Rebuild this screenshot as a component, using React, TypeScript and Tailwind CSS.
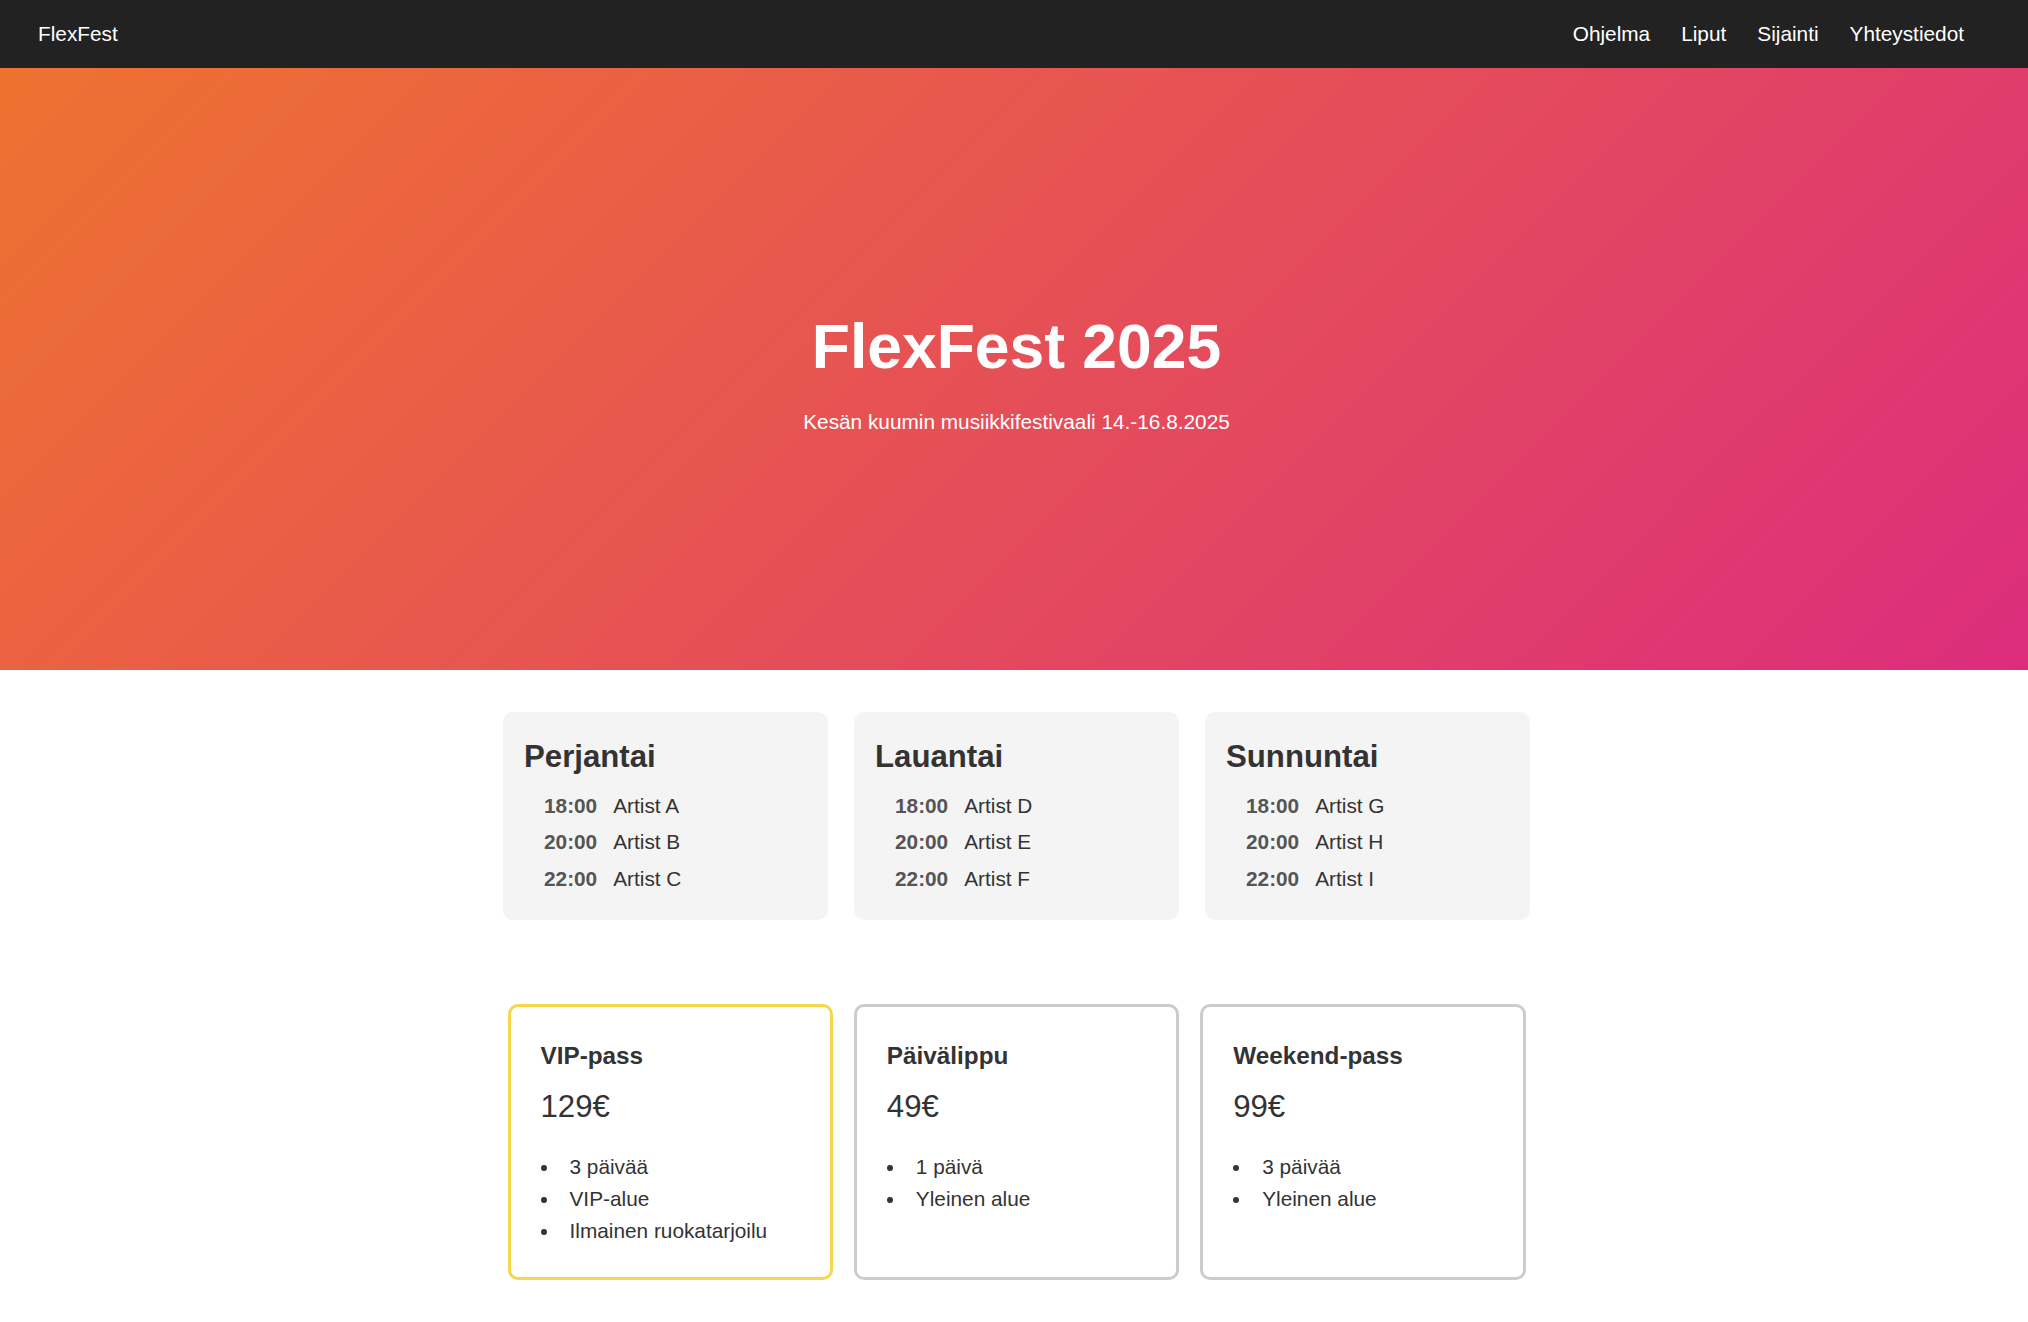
import React from "react";

const days = [
  { name: "Perjantai", rows: [["18:00", "Artist A"], ["20:00", "Artist B"], ["22:00", "Artist C"]] },
  { name: "Lauantai", rows: [["18:00", "Artist D"], ["20:00", "Artist E"], ["22:00", "Artist F"]] },
  { name: "Sunnuntai", rows: [["18:00", "Artist G"], ["20:00", "Artist H"], ["22:00", "Artist I"]] },
];

const tickets = [
  { name: "VIP-pass", price: "129€", items: ["3 päivää", "VIP-alue", "Ilmainen ruokatarjoilu"], vip: true },
  { name: "Päivälippu", price: "49€", items: ["1 päivä", "Yleinen alue"], vip: false },
  { name: "Weekend-pass", price: "99€", items: ["3 päivää", "Yleinen alue"], vip: false },
];

export default function App() {
  return (
    <div className="min-h-[1322px] bg-white font-['Liberation_Sans',Arial,sans-serif] text-[#333]">
      <nav className="flex h-[68px] items-center justify-between bg-[#222] pl-[38px] pr-[64px] text-[20.8px] text-white">
        <div>FlexFest</div>
        <ul className="flex gap-[31px]">
          <li>Ohjelma</li>
          <li>Liput</li>
          <li>Sijainti</li>
          <li>Yhteystiedot</li>
        </ul>
      </nav>

      <header className="flex h-[602px] flex-col items-center justify-center bg-[linear-gradient(135deg,#ef7230,#dc2d7d)] pl-[5px] pt-[6px] text-white">
        <h1 className="text-[62.4px] font-bold leading-[72px]">FlexFest 2025</h1>
        <p className="mt-[27px] text-[20.8px] leading-[24px]">Kesän kuumin musiikkifestivaali 14.-16.8.2025</p>
      </header>

      <div className="pl-[5px]">
        <section className="mx-auto mt-[42px] grid w-[1027px] grid-cols-3 gap-[26px]">
          {days.map((d) => (
            <div key={d.name} className="rounded-[10px] bg-[#f4f4f4] px-[21px] pb-[23px] pt-[27px]">
              <h2 className="text-[31.2px] font-bold leading-[35px]">{d.name}</h2>
              <ul className="mt-[13px]">
                {d.rows.map(([t, a]) => (
                  <li key={t} className="flex h-[36.5px] items-center pl-[20px] text-[20.8px]">
                    <span className="mr-[16px] font-bold text-[#555]">{t}</span>
                    <span>{a}</span>
                  </li>
                ))}
              </ul>
            </div>
          ))}
        </section>

        <section className="mx-auto mt-[84px] grid w-[1018px] grid-cols-3 gap-[21px]">
          {tickets.map((t) => (
            <div
              key={t.name}
              className={
                t.vip
                  ? "rounded-[10px] border-[3px] border-[#f6d64c] px-[30px] pb-[30px] pt-[35px]"
                  : "rounded-[10px] border-[3px] border-[#cccccc] px-[30px] pb-[30px] pt-[35px]"
              }
            >
              <h3 className="text-[24.3px] font-bold leading-[27px]">{t.name}</h3>
              <div className="mt-[20px] text-[31.2px] leading-[36px]">{t.price}</div>
              <ul className="mt-[26px]">
                {t.items.map((i) => (
                  <li key={i} className="flex h-[32px] items-center text-[20.8px]">
                    <span className="mt-[3px] h-[6px] w-[6px] shrink-0 rounded-full bg-[#333]" />
                    <span className="ml-[23px]">{i}</span>
                  </li>
                ))}
              </ul>
            </div>
          ))}
        </section>
      </div>
    </div>
  );
}
